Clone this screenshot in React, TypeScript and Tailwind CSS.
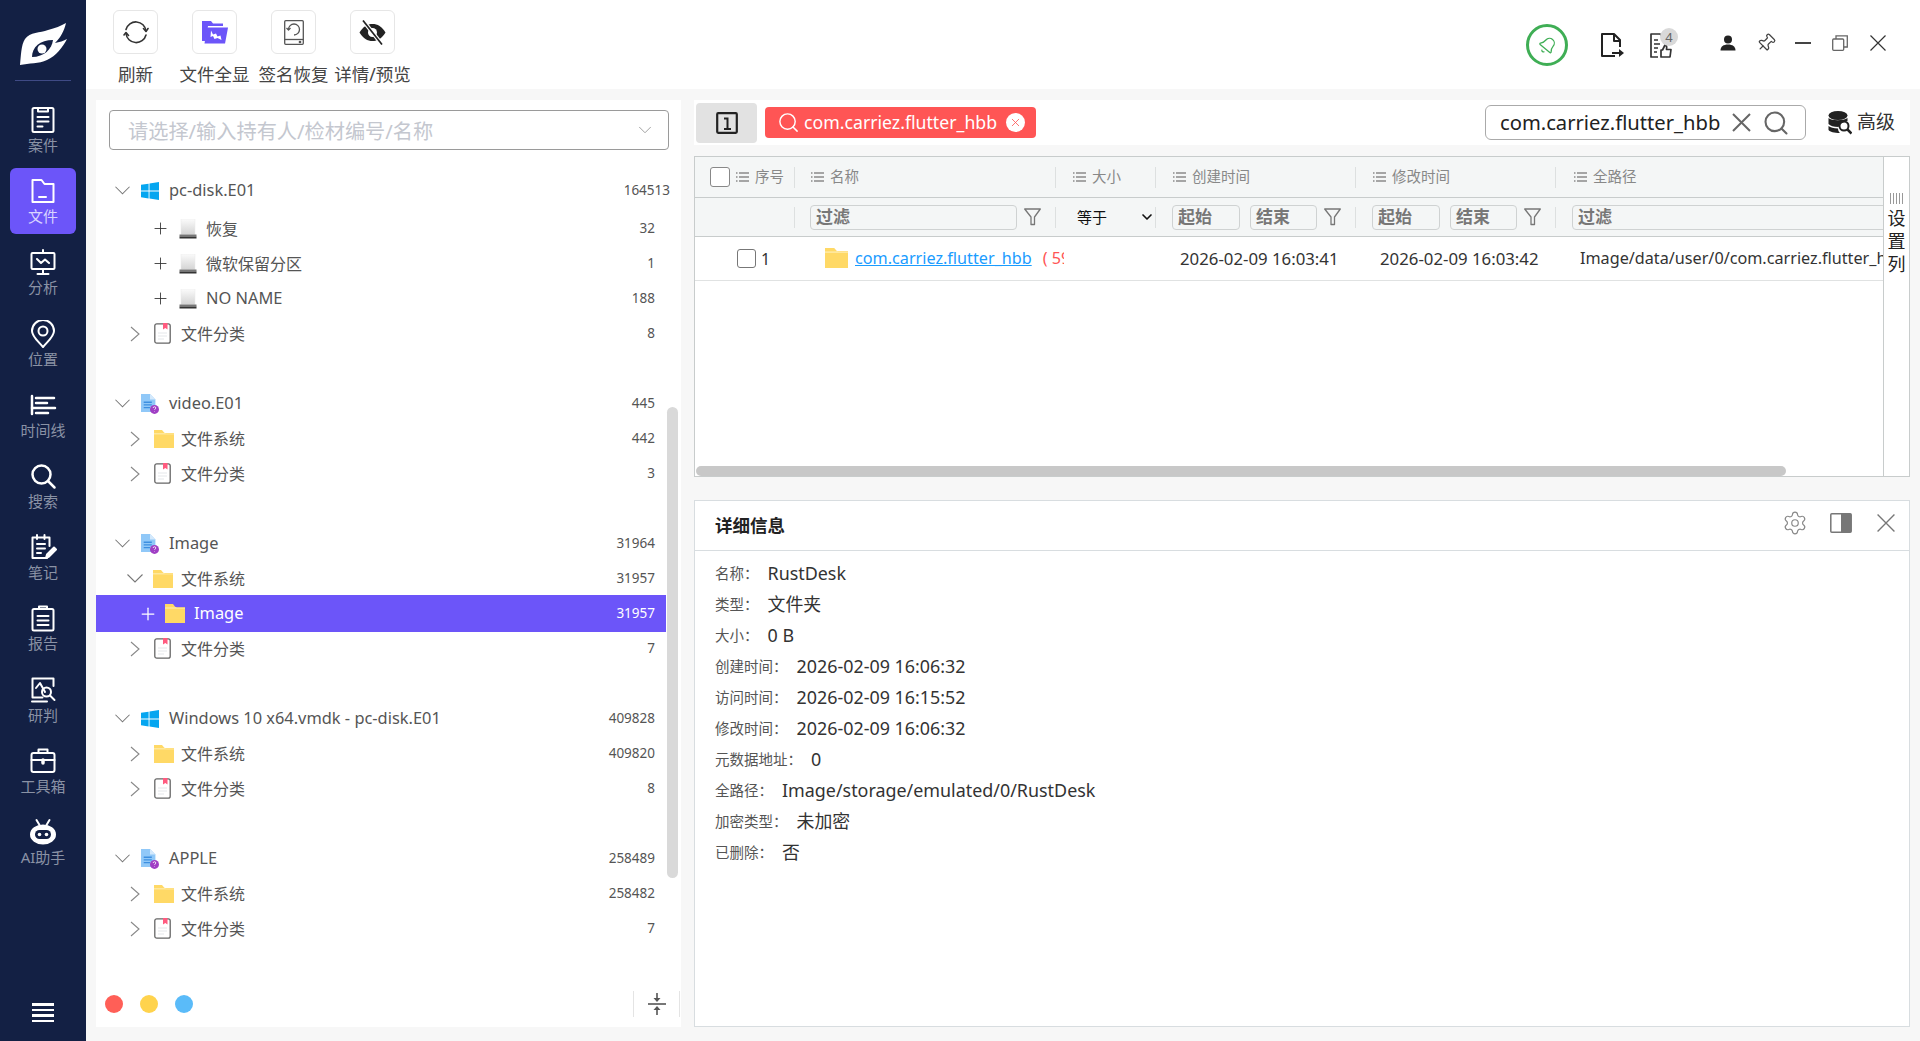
import type { ReactNode } from 'react'
import { Bell, ChevronDown, Pin, Plus, Search, Settings, X } from 'lucide-react'

const FONT = "font-['Noto_Sans','Noto_Sans_CJK_SC',sans-serif]"

function NavIcon({ children }: { children: ReactNode }) {
  return (
    <svg width="28" height="28" viewBox="0 0 28 28" fill="none" stroke="white" strokeWidth="2" strokeLinecap="round" strokeLinejoin="round">
      {children}
    </svg>
  )
}

const NAV_ITEMS: { label: string; active?: boolean; icon: ReactNode }[] = [
  {
    label: '案件',
    icon: (
      <>
        <rect x="3.5" y="2" width="21" height="24" rx="1.5" />
        <path d="M9 2.5v3h10v-3M8.5 11h11M8.5 15.5h11M8.5 20.5h5" />
      </>
    ),
  },
  {
    label: '文件',
    active: true,
    icon: (
      <>
        <path d="M3.5 3h9l3 4h9v18h-21z" />
        <path d="M10 20h7" />
      </>
    ),
  },
  {
    label: '分析',
    icon: (
      <>
        <rect x="2.5" y="5" width="23" height="16" rx="1" />
        <path d="M14 2v3M14 21v4M8.5 26h11M8 11l4 4 4-3.5 4 3.5" />
      </>
    ),
  },
  {
    label: '位置',
    icon: (
      <>
        <path d="M14 27C9 21 3 16.500 3 11a11 11 0 0 1 22 0c0 5.500-6 10-11 16z" />
        <circle cx="14" cy="11" r="4.500" />
      </>
    ),
  },
  {
    label: '时间线',
    icon: (
      <>
        <path d="M3 5v18" strokeWidth="2.500" />
        <path d="M7 7h18M7 12h11M3 17h23M7 22h12" strokeWidth="2.500" />
      </>
    ),
  },
  {
    label: '搜索',
    icon: (
      <>
        <circle cx="12.500" cy="12.500" r="9" strokeWidth="2.500" />
        <path d="M19 19l6.500 6.500" strokeWidth="2.500" />
      </>
    ),
  },
  {
    label: '笔记',
    icon: (
      <>
        <path d="M18 25H3.500V4.500h17V13" />
        <path d="M8 2v4M15.500 2v4M8 11h8M8 15.500h8M8 20h4" />
        <path d="M17 25l1-3.500 7-7 2 2-7 7z" fill="white" />
      </>
    ),
  },
  {
    label: '报告',
    icon: (
      <>
        <rect x="3.500" y="5" width="21" height="21.500" rx="1.500" />
        <path d="M10 5V2.500h8V5M8.500 12h11M8.500 16.500h11M8.500 21h11" />
      </>
    ),
  },
  {
    label: '研判',
    icon: (
      <>
        <path d="M24.500 10V2.500h-21v19h10" />
        <path d="M3 25.500h15M7 12l4-5 5 9" />
        <circle cx="17.500" cy="16" r="4.500" />
        <path d="M21 19.500l4.500 4.500" />
      </>
    ),
  },
  {
    label: '工具箱',
    icon: (
      <>
        <rect x="2.500" y="6" width="23" height="19" rx="2" />
        <path d="M9.500 6V2.500h9V6M2.500 13h23" />
        <path d="M14 13v3" strokeWidth="3.500" />
      </>
    ),
  },
  {
    label: 'AI助手',
    icon: (
      <>
        <path d="M7.500 2l3 5M20.500 2l-3 5" />
        <ellipse cx="14" cy="16.500" rx="12" ry="9" fill="white" />
        <rect x="6" y="12" width="16" height="9" rx="4.500" fill="#132044" stroke="none" />
        <circle cx="10.500" cy="16.500" r="1.800" fill="white" stroke="none" />
        <circle cx="17.500" cy="16.500" r="1.800" fill="white" stroke="none" />
      </>
    ),
  },
]

function Logo() {
  return (
    <svg width="47" height="42" viewBox="0 0 47 42">
      <path
        d="M0 42C1 33 1 22 5 16C10 9 20 10 28 7C35 5 41 3 46 0C44 8 41 14 35 20C39 19 44 18 47 16C43 24 36 33 27 37C19 41 9 40 0 42z"
        fill="white"
      />
      <path d="M12 34C12 24 20 17 33 17C32 26 24 34 12 34z" fill="#132044" />
      <circle cx="22" cy="26" r="4.500" fill="white" />
    </svg>
  )
}

function Sidebar() {
  return (
    <div className="w-[86px] h-full shrink-0 bg-[#132044] flex flex-col items-center pt-[23px]">
      <Logo />
      <div className="w-[56px] h-px bg-[#3f4a85] mt-[15px]" />
      <div className="flex flex-col gap-[5.2px] mt-[16px]">
        {NAV_ITEMS.map(item => (
          <div
            key={item.label}
            className={`w-[66px] h-[66px] rounded-md flex flex-col items-center pt-[9px] ${item.active ? 'bg-[#6c55f9]' : ''}`}
          >
            <NavIcon>{item.icon}</NavIcon>
            <span className={`mt-px h-[20px] leading-[20px] text-[15px] whitespace-nowrap ${item.active ? 'text-[#d9d4ff]' : 'text-[#8a92a5]'}`}>
              {item.label}
            </span>
          </div>
        ))}
      </div>
      <div className="mt-auto mb-[19px] w-[22px] flex flex-col gap-[3px]">
        <div className="h-[2.5px] bg-white" />
        <div className="h-[2.5px] bg-white" />
        <div className="h-[2.5px] bg-white" />
        <div className="h-[2.5px] bg-white" />
      </div>
    </div>
  )
}

function ThinX({ size, color }: { size: number; color: string }) {
  return (
    <svg width={size} height={size} viewBox="0 0 16 16" fill="none" stroke={color} strokeWidth="1.200" className="shrink-0">
      <path d="M0.500 0.500l15 15M15.500 0.500l-15 15" />
    </svg>
  )
}

function ToolButton({ label, children }: { label: string; children: ReactNode }) {
  return (
    <div className="w-[79px] flex flex-col items-center pt-[10px]">
      <div className="w-[45px] h-[44px] rounded-md border border-[#e6e6e6] flex items-center justify-center">{children}</div>
      <span className="mt-[8px] text-[17.500px] leading-[24px] text-[#444] whitespace-nowrap">{label}</span>
    </div>
  )
}

function Toolbar() {
  return (
    <div className="h-[89px] bg-white flex items-start pl-[10px] shrink-0">
      <ToolButton label="刷新">
        <svg width="26" height="26" viewBox="0 0 26 26" fill="none" stroke="#333" strokeWidth="1.600" strokeLinecap="round" strokeLinejoin="round">
          <path d="M3 10.500A10.200 10.200 0 0 1 23 12" />
          <path d="M23 16A10.200 10.200 0 0 1 3 14.500" />
          <path d="M20.500 9.500L23 12.500l2-3M1 16l2-2.500 2.500 3" />
        </svg>
      </ToolButton>
      <ToolButton label="文件全显">
        <svg width="26" height="23" viewBox="0 0 26 23">
          <path d="M0 0h9l2 2.500h10V5H6L3.500 20H0z" fill="#6c55f9" />
          <path d="M5 6.500h21L23 22.500H2.500z" fill="#6c55f9" />
          <path d="M9 9.500l2 4 3-1 1.500 3 3-1 1 4.500-4-2-3 1-1.500-3-2.500 1z" fill="white" />
        </svg>
      </ToolButton>
      <ToolButton label="签名恢复">
        <svg width="20" height="25" viewBox="0 0 20 25" fill="none" stroke="#555" strokeWidth="1.300" strokeLinejoin="round">
          <rect x="0.700" y="0.700" width="18.600" height="23.600" rx="1" />
          <path d="M0.700 19.500h18.600" />
          <path d="M4.500 9.500A5.500 5.500 0 1 1 10 15" />
          <path d="M2.500 8l2 2 2-2" />
          <circle cx="16" cy="22" r="0.700" fill="#555" />
        </svg>
      </ToolButton>
      <ToolButton label="详情/预览">
        <svg width="27" height="25" viewBox="0 0 27 25" fill="none">
          <path d="M0.500 12.500C4 6.500 8.500 4 13.500 4s9.500 2.500 13 8.500c-3.500 6-8 8.500-13 8.500s-9.500-2.500-13-8.500z" fill="#222" />
          <circle cx="13.500" cy="12.500" r="4.500" fill="white" />
          <path d="M4 0.500L23 24.500" stroke="white" strokeWidth="4" />
          <path d="M4 0.500L23 24.500" stroke="#222" strokeWidth="1.700" />
        </svg>
      </ToolButton>
      <div className="ml-auto flex items-center h-[90px] pr-[34px]">
        <div className="w-[42px] h-[42px] rounded-full border-[3px] border-[#3fae55] flex items-center justify-center">
          <Bell size={19} strokeWidth={1.600} className="text-[#3fae55] rotate-[40deg]" />
        </div>
        <div className="ml-[32px]">
          <svg width="24" height="26" viewBox="0 0 24 26" fill="none" stroke="#222" strokeWidth="2" strokeLinejoin="round">
            <path d="M15 24H2V2h12l6 6v7" />
            <path d="M14 2v7h6" />
            <path d="M12 21h8" />
            <path d="M19 17l5 4-5 4z" fill="#222" stroke="none" />
          </svg>
        </div>
        <div className="relative ml-[26px]">
          <svg width="22" height="26" viewBox="0 0 22 26" fill="none" stroke="#333" strokeWidth="1.700" strokeLinejoin="round">
            <path d="M8 25H1V2h9l4 4v6" />
            <path d="M4 8h4M4 12h6M4 16h4M4 20h3" />
            <path d="M11 25v-7h1.500l2.500-5c1.500 0 2 1.500 1.500 4.500H21l-1 7.500z" />
          </svg>
          <span className="absolute -top-[4px] left-[10px] w-[18px] h-[18px] rounded-full bg-[#d9d9d9] text-[#666] text-[13px] leading-[18px] text-center">4</span>
        </div>
        <div className="flex items-center -mt-[4px]">
          <svg width="16" height="16" viewBox="0 0 16 16" fill="#222" className="ml-[48px]">
            <circle cx="8" cy="4.500" r="4" />
            <path d="M0.500 15.500c0-4 3-6 7.500-6s7.500 2 7.500 6z" />
          </svg>
          <Pin size={20} strokeWidth={1.500} className="ml-[20px] text-[#444] rotate-45" />
          <div className="ml-[19px] w-[16px] h-[2px] bg-[#444]" />
          <svg width="16" height="16" viewBox="0 0 16 16" fill="none" stroke="#666" strokeWidth="1.300" className="ml-[21px]">
            <rect x="0.700" y="4" width="11" height="11.300" rx="1" />
            <path d="M4 4V0.800h11.300V12H12" />
          </svg>
          <div className="ml-[22px]">
            <ThinX size={16} color="#333" />
          </div>
        </div>
      </div>
    </div>
  )
}

function WinIcon() {
  return (
    <svg width="18" height="18" viewBox="0 0 18 18" fill="#05a6f0">
      <path d="M0 2.800l7.600-1.100v6.900H0zM8.500 1.500L18 0v8.600H8.500zM0 9.500h7.600v6.900L0 15.300zM8.500 9.500H18V18l-9.500-1.400z" />
    </svg>
  )
}

function EvidenceIcon() {
  return (
    <svg width="20" height="22" viewBox="0 0 20 22">
      <path d="M0 0h10l6 6v14H0z" fill="#90c8f8" />
      <path d="M10 0l6 6h-6z" fill="#d4e9fc" />
      <path d="M3 9h9M3 12h9M3 15h7" stroke="#3d8fe0" strokeWidth="1.500" />
      <circle cx="15" cy="17" r="5" fill="#a03ec4" />
      <path d="M13.500 15.500c0-2 3-2 3 0 0 1-1.500 1-1.500 2M15 19v.5" stroke="white" strokeWidth="0.900" fill="none" />
    </svg>
  )
}

function DriveIcon() {
  return (
    <svg width="18" height="20" viewBox="0 0 18 20">
      <defs>
        <linearGradient id="driveFill" x1="0" y1="0" x2="0" y2="1">
          <stop offset="0" stopColor="#fbfbfb" />
          <stop offset="1" stopColor="#d4d4d4" />
        </linearGradient>
      </defs>
      <path d="M2 0h14v15.500H2z" fill="url(#driveFill)" stroke="#e8e8e8" strokeWidth="0.500" />
      <rect x="0.500" y="15.500" width="17" height="2" fill="#777" />
      <rect x="0.500" y="17.500" width="17" height="2" fill="#333" />
    </svg>
  )
}

function ClassIcon() {
  return (
    <svg width="17" height="21" viewBox="0 0 17 21" fill="none">
      <rect x="0.800" y="0.800" width="15.400" height="19.400" rx="2" stroke="#666" strokeWidth="1.300" fill="white" />
      <path d="M9 0h4.500v6.500l-2.200-1.500L9 6.500z" fill="#ff5b7f" />
      <path d="M4 10h9M4 13h9M4 16h6" stroke="#e4e7ea" strokeWidth="1" />
    </svg>
  )
}

function FolderIcon({ w = 20, h = 18 }: { w?: number; h?: number }) {
  return (
    <svg width={w} height={h} viewBox="0 0 20 18" preserveAspectRatio="none" className="shrink-0">
      <path d="M0 0h8l2.500 3H20v15H0z" fill="#ffd966" />
      <path d="M10 2.500l2 1H20v1H0V3h10z" fill="#ffe89c" />
    </svg>
  )
}

type RowKind = 'root' | 'plus' | 'closed' | 'open' | 'selected'
type RowIcon = 'win' | 'evidence' | 'drive' | 'class' | 'folder'

interface TreeRow {
  kind: RowKind
  icon: RowIcon
  label: string
  count: string
  gapBefore?: boolean
  wide?: boolean
}

const TREE: TreeRow[] = [
  { kind: 'root', icon: 'win', label: 'pc-disk.E01', count: '164513', wide: true },
  { kind: 'plus', icon: 'drive', label: '恢复', count: '32' },
  { kind: 'plus', icon: 'drive', label: '微软保留分区', count: '1' },
  { kind: 'plus', icon: 'drive', label: 'NO NAME', count: '188' },
  { kind: 'closed', icon: 'class', label: '文件分类', count: '8' },
  { kind: 'root', icon: 'evidence', label: 'video.E01', count: '445', gapBefore: true },
  { kind: 'closed', icon: 'folder', label: '文件系统', count: '442' },
  { kind: 'closed', icon: 'class', label: '文件分类', count: '3' },
  { kind: 'root', icon: 'evidence', label: 'Image', count: '31964', gapBefore: true },
  { kind: 'open', icon: 'folder', label: '文件系统', count: '31957' },
  { kind: 'selected', icon: 'folder', label: 'Image', count: '31957' },
  { kind: 'closed', icon: 'class', label: '文件分类', count: '7' },
  { kind: 'root', icon: 'win', label: 'Windows 10 x64.vmdk - pc-disk.E01', count: '409828', gapBefore: true },
  { kind: 'closed', icon: 'folder', label: '文件系统', count: '409820' },
  { kind: 'closed', icon: 'class', label: '文件分类', count: '8' },
  { kind: 'root', icon: 'evidence', label: 'APPLE', count: '258489', gapBefore: true },
  { kind: 'closed', icon: 'folder', label: '文件系统', count: '258482' },
  { kind: 'closed', icon: 'class', label: '文件分类', count: '7' },
]

const ROW_STYLE: Record<RowKind, { pad: string; slot: string; icon: string; label: string }> = {
  root: { pad: 'pl-[19px]', slot: 'w-[15px]', icon: 'ml-[11px] w-[18px]', label: 'ml-[10px]' },
  closed: { pad: 'pl-[34px]', slot: 'w-[10px]', icon: 'ml-[14px] w-[17px]', label: 'ml-[10px]' },
  open: { pad: 'pl-[31px]', slot: 'w-[16px]', icon: 'ml-[10px] w-[19px]', label: 'ml-[9px]' },
  plus: { pad: 'pl-[59px]', slot: 'w-[11px]', icon: 'ml-[13px] w-[18px]', label: 'ml-[9px]' },
  selected: { pad: 'pl-[46px]', slot: 'w-[12px]', icon: 'ml-[11px] w-[20px]', label: 'ml-[9px]' },
}

function Expander({ kind }: { kind: RowKind }) {
  if (kind === 'plus') return <Plus size={19} strokeWidth={1.100} className="text-[#333] -ml-[4px] shrink-0" />
  if (kind === 'selected') return <Plus size={20} strokeWidth={1.500} className="text-white -ml-[4px] shrink-0" />
  if (kind === 'closed') {
    return (
      <svg width="10" height="16" viewBox="0 0 10 16" fill="none" stroke="#888" strokeWidth="1.100">
        <path d="M1 1l8 7-8 7" />
      </svg>
    )
  }
  return (
    <svg width="16" height="9" viewBox="0 0 16 9" fill="none" stroke="#777" strokeWidth="1.100">
      <path d="M0.500 0.500L8 8l7.500-7.500" />
    </svg>
  )
}

function RowGlyph({ icon, selected }: { icon: RowIcon; selected: boolean }) {
  if (icon === 'win') return <WinIcon />
  if (icon === 'evidence') return <EvidenceIcon />
  if (icon === 'drive') return <DriveIcon />
  if (icon === 'class') return <ClassIcon />
  return selected ? <FolderIcon w={20} h={19} /> : <FolderIcon />
}

function Tree() {
  return (
    <div className="relative mt-[23px] flex-1 w-[570px]">
      {TREE.map((row, i) => {
        const style = ROW_STYLE[row.kind]
        const selected = row.kind === 'selected'
        const latin = /^[\x00-\x7f]+$/.test(row.label)
        return (
          <div
            key={`${row.label}-${row.count}`}
            className={`flex items-center ${selected ? 'h-[37px] -my-px bg-[#6c55f9] text-white' : 'h-[35px] text-[#555]'} ${row.gapBefore ? 'mt-[35px]' : ''} ${i === 0 ? 'mb-[3px]' : ''} ${style.pad} pr-[11px]`}
          >
            <div className={`${style.slot} shrink-0 flex items-center`}>
              <Expander kind={row.kind} />
            </div>
            <div className={`${style.icon} shrink-0 flex items-center`}>
              <RowGlyph icon={row.icon} selected={selected} />
            </div>
            <span className={`${style.label} ${latin ? 'text-[16.400px]' : 'text-[16px]'} whitespace-nowrap`}>{row.label}</span>
            <span className={`ml-auto text-[13.500px] ${row.wide ? '-mr-[15px]' : ''}`}>{row.count}</span>
          </div>
        )
      })}
      <div className="absolute top-[234px] left-[571px] w-[11px] h-[471px] rounded-md bg-[#d9d9d9]" />
    </div>
  )
}

function LeftPanel() {
  return (
    <div className="w-[585px] ml-[10px] mt-[11px] mb-[14px] bg-white flex flex-col">
      <div className="ml-[13px] mr-[12px] mt-[10px] h-[40px] shrink-0 border border-[#9a9a9a] rounded flex items-center pl-[18px] pr-[12px]">
        <span className="text-[20.200px] text-[#c4c7cf] mt-[2px]">请选择/输入持有人/检材编号/名称</span>
        <ChevronDown size={22} strokeWidth={1} className="ml-auto text-[#999]" />
      </div>
      <Tree />
      <div className="h-[46px] flex items-center shrink-0 pl-[9px]">
        <div className="w-[18px] h-[18px] rounded-full bg-[#ff5f57]" />
        <div className="w-[18px] h-[18px] rounded-full bg-[#ffd34d] ml-[17px]" />
        <div className="w-[18px] h-[18px] rounded-full bg-[#5abbf9] ml-[17px]" />
        <div className="ml-auto flex items-center h-[26px] w-[47px] justify-center border-x border-[#e4e4e4] mr-[1px]">
          <svg width="18" height="24" viewBox="0 0 18 24" fill="none" stroke="#555" strokeWidth="1.600">
            <path d="M0 12h18" />
            <path d="M9 1v7M9 16v7" />
            <path d="M5.500 6h7L9 10z" fill="#555" stroke="none" />
            <path d="M5.500 18h7L9 14z" fill="#555" stroke="none" />
          </svg>
        </div>
      </div>
    </div>
  )
}

function ListGlyph() {
  return (
    <svg width="13" height="10" viewBox="0 0 13 10" fill="none" stroke="#8a8a8a" strokeWidth="1.300" className="shrink-0">
      <path d="M0 1h1.500M3 1h10M0 5h1.500M3 5h10M0 9h1.500M3 9h10" />
    </svg>
  )
}

function Funnel() {
  return (
    <svg width="17" height="18" viewBox="0 0 17 18" fill="none" stroke="#777" strokeWidth="1.300" strokeLinejoin="round" className="shrink-0">
      <path d="M0.700 1h15.600L10.500 9v7.500H7V9z" />
    </svg>
  )
}

function HeadCell({ w, pad, label, children }: { w: string; pad: string; label: string; children?: ReactNode }) {
  return (
    <div className={`${w} ${pad} h-[21px] shrink-0 flex items-center border-r border-[#dde0e0] last:border-r-0`}>
      {children}
      <ListGlyph />
      <span className="ml-[6px] text-[14.500px] text-[#888] whitespace-nowrap">{label}</span>
    </div>
  )
}

function FilterBox({ w, label }: { w: string; label: string }) {
  return (
    <div className={`${w} h-[25px] shrink-0 border border-[#cfd2d2] rounded flex items-center pl-[5px] text-[17px] font-bold text-[#777]`}>
      {label}
    </div>
  )
}

function DateFilter() {
  return (
    <div className="w-[200px] h-[21px] shrink-0 border-r border-[#dde0e0] flex items-center pl-[16px]">
      <FilterBox w="w-[68px]" label="起始" />
      <FilterBox w="w-[67px] ml-[10px]" label="结束" />
      <span className="ml-[7px]"><Funnel /></span>
    </div>
  )
}

function FileTable() {
  return (
    <div className="mt-[11px] h-[321px] shrink-0 border border-[#c8cccc] bg-white flex">
      <div className="flex-1 min-w-0 flex flex-col overflow-hidden">
        <div className="h-[41px] shrink-0 bg-[#f4f6f6] border-b border-[#c8cccc] flex items-center">
          <HeadCell w="w-[100px]" pad="pl-[15px]" label="序号">
            <div className="w-[20px] h-[20px] rounded-[3px] border border-[#888] bg-white mr-[6px] shrink-0" />
          </HeadCell>
          <HeadCell w="w-[261px]" pad="pl-[16px]" label="名称" />
          <HeadCell w="w-[100px]" pad="pl-[17px]" label="大小" />
          <HeadCell w="w-[200px]" pad="pl-[17px]" label="创建时间" />
          <HeadCell w="w-[200px]" pad="pl-[17px]" label="修改时间" />
          <HeadCell w="w-[328px]" pad="pl-[18px]" label="全路径" />
        </div>
        <div className="h-[39px] shrink-0 bg-[#f4f6f6] border-b border-[#c8cccc] flex items-center">
          <div className="w-[100px] h-[21px] shrink-0 border-r border-[#dde0e0]" />
          <div className="w-[261px] h-[21px] shrink-0 border-r border-[#dde0e0] flex items-center pl-[15px]">
            <FilterBox w="w-[207px]" label="过滤" />
            <span className="ml-[7px]"><Funnel /></span>
          </div>
          <div className="w-[100px] h-[21px] shrink-0 border-r border-[#dde0e0] flex items-center pl-[21px] text-[15px] text-[#111]">
            等于
            <ChevronDown size={16} strokeWidth={2.500} className="ml-auto" />
          </div>
          <DateFilter />
          <DateFilter />
          <div className="flex-1 pl-[16px] min-w-0">
            <FilterBox w="w-[320px]" label="过滤" />
          </div>
        </div>
        <div className="h-[44px] shrink-0 border-b border-[#e0e2e2] flex items-center text-[#333] whitespace-nowrap">
          <div className="w-[100px] shrink-0 flex items-center pl-[42px] text-[16px]">
            <div className="w-[19px] h-[19px] rounded-[3px] border-[1.500px] border-[#777] bg-white shrink-0" />
            <span className="ml-[5px]">1</span>
          </div>
          <div className="w-[269px] shrink-0 flex items-center pl-[30px] overflow-hidden text-[16.200px]">
            <FolderIcon w={23} h={20} />
            <span className="ml-[7px] text-[#1a9cff] underline">com.carriez.flutter_hbb</span>
            <span className="ml-[11px] text-[#ff5555]">( 59</span>
          </div>
          <div className="w-[92px] shrink-0" />
          <div className="w-[200px] shrink-0 pl-[24px] text-[16.800px]">2026-02-09 16:03:41</div>
          <div className="w-[200px] shrink-0 pl-[24px] text-[16.800px]">2026-02-09 16:03:42</div>
          <div className="pl-[24px] flex-1 min-w-0 overflow-hidden text-[16.200px]">Image/data/user/0/com.carriez.flutter_hbb</div>
        </div>
        <div className="flex-1" />
        <div className="h-[10px] w-[1090px] ml-[1px] shrink-0 bg-[#c8c8c8] rounded-md" />
      </div>
      <div className="w-[26px] shrink-0 border-l border-[#c8cccc] flex flex-col items-center pt-[36px]">
        <div className="flex gap-[2px] h-[11px]">
          <div className="w-px bg-[#999]" />
          <div className="w-px bg-[#999]" />
          <div className="w-px bg-[#999]" />
          <div className="w-px bg-[#999]" />
          <div className="w-px bg-[#999]" />
        </div>
        <span className="mt-[3px] text-[18px] leading-[23px] text-[#222] w-[18px] text-center">设置列</span>
      </div>
    </div>
  )
}

function SearchStrip() {
  return (
    <div className="h-[45px] shrink-0 bg-white flex items-center pl-[2px]">
      <div className="w-[61px] h-[40px] rounded bg-[#e2e2e2] flex items-center justify-center">
        <svg width="22" height="22" viewBox="0 0 22 22" fill="none" stroke="#222" strokeWidth="2.200">
          <rect x="1.200" y="1.200" width="19.600" height="19.600" rx="1" />
          <path d="M8 6.500h3.500V17M8 17h7" strokeWidth="2" />
        </svg>
      </div>
      <div className="ml-[8px] w-[271px] h-[31px] rounded bg-[#ff5555] flex items-center pl-[12px] text-white text-[17.700px] whitespace-nowrap">
        <Search size={23} strokeWidth={1.500} className="shrink-0" />
        <span className="ml-[4px]">com.carriez.flutter_hbb</span>
        <div className="ml-[9px] w-[19px] h-[19px] rounded-full bg-white flex items-center justify-center shrink-0">
          <X size={13} strokeWidth={1.500} className="text-[#ff5555]" />
        </div>
      </div>
      <div className="ml-auto w-[321px] h-[35px] border border-[#aaa] rounded-md bg-white flex items-center pl-[14px] text-[20.200px] text-[#222] whitespace-nowrap">
        com.carriez.flutter_hbb
        <span className="ml-[12px]">
          <svg width="19" height="19" viewBox="0 0 19 19" fill="none" stroke="#666" strokeWidth="2">
            <path d="M1 1l17 17M18 1L1 18" />
          </svg>
        </span>
        <Search size={28} strokeWidth={1.800} className="ml-[11px] text-[#666] shrink-0" />
      </div>
      <div className="ml-[22px] mr-[15px] flex items-center">
        <svg width="24" height="24" viewBox="0 0 24 24">
          <ellipse cx="10" cy="4.500" rx="9.500" ry="4.500" fill="#222" />
          <path d="M0.500 7c3 3 15 3 19 0v3c-5 1-8 3-9 6-5 0-8-1-10-3zM0.500 15c2 1.500 5 2.500 9.500 2.500 0 2 1 3.500 2 4.500-6 0-10-1-11.500-3z" fill="#222" />
          <circle cx="16" cy="15" r="4.500" fill="none" stroke="#222" strokeWidth="2" />
          <path d="M19 18l4.500 4.500" stroke="#222" strokeWidth="2.500" />
        </svg>
        <span className="ml-[5px] text-[19px] text-[#333]">高级</span>
      </div>
    </div>
  )
}

const DETAILS: [string, string][] = [
  ['名称：', 'RustDesk'],
  ['类型：', '文件夹'],
  ['大小：', '0 B'],
  ['创建时间：', '2026-02-09 16:06:32'],
  ['访问时间：', '2026-02-09 16:15:52'],
  ['修改时间：', '2026-02-09 16:06:32'],
  ['元数据地址：', '0'],
  ['全路径：', 'Image/storage/emulated/0/RustDesk'],
  ['加密类型：', '未加密'],
  ['已删除：', '否'],
]

function DetailPanel() {
  return (
    <div className="mt-[23px] flex-1 min-h-0 border border-[#d8dde0] bg-white flex flex-col">
      <div className="h-[50px] shrink-0 border-b border-[#d8dde0] flex items-center pl-[20px] pr-[14px]">
        <span className="text-[17.500px] font-bold text-[#222]">详细信息</span>
        <div className="ml-auto flex items-center -mt-[5px]">
          <Settings size={26} strokeWidth={1.100} className="text-[#888]" />
          <svg width="22" height="20" viewBox="0 0 22 20" fill="none" stroke="#777" strokeWidth="1.500" className="ml-[22px]">
            <rect x="0.800" y="0.800" width="20.400" height="18.400" rx="1" />
            <rect x="11" y="1" width="10" height="18" fill="#777" stroke="none" />
          </svg>
          <div className="ml-[25px]">
            <ThinX size={18} color="#777" />
          </div>
        </div>
      </div>
      <div className="pl-[20px] pt-[7px] flex flex-col">
        {DETAILS.map(([name, value]) => (
          <div key={name} className="h-[31px] flex items-center whitespace-nowrap">
            <span className="text-[14.500px] text-[#555]">{name}</span>
            <span className="ml-[9px] text-[17.900px] text-[#333]">{value}</span>
          </div>
        ))}
      </div>
    </div>
  )
}

export default function App() {
  return (
    <div className={`${FONT} w-[1920px] h-[1041px] flex overflow-hidden bg-[#f7f7f7]`}>
      <Sidebar />
      <div className="flex-1 min-w-0 flex flex-col">
        <Toolbar />
        <div className="flex-1 min-h-0 flex">
          <LeftPanel />
          <div className="w-[1216px] ml-[13px] mt-[11px] mb-[14px] flex flex-col">
            <SearchStrip />
            <FileTable />
            <DetailPanel />
          </div>
        </div>
      </div>
    </div>
  )
}
